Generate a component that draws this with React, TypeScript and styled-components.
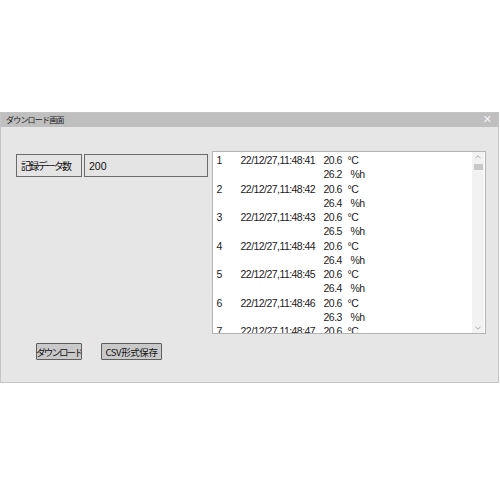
import React from "react";
import styled, { createGlobalStyle } from "styled-components";

const GlobalStyle = createGlobalStyle`
  html, body {
    margin: 0;
    padding: 0;
    background: #ffffff;
  }
  body {
    font-family: "Liberation Sans", "Noto Sans CJK JP", sans-serif;
  }
`;

type Record = {
  no: number;
  time: string;
  temp: string;
  hum: string;
};

const records: Record[] = [
  { no: 1, time: "22/12/27,11:48:41", temp: "20.6", hum: "26.2" },
  { no: 2, time: "22/12/27,11:48:42", temp: "20.6", hum: "26.4" },
  { no: 3, time: "22/12/27,11:48:43", temp: "20.6", hum: "26.5" },
  { no: 4, time: "22/12/27,11:48:44", temp: "20.6", hum: "26.4" },
  { no: 5, time: "22/12/27,11:48:45", temp: "20.6", hum: "26.4" },
  { no: 6, time: "22/12/27,11:48:46", temp: "20.6", hum: "26.3" },
  { no: 7, time: "22/12/27,11:48:47", temp: "20.6", hum: "26.3" },
];

const Page = styled.div`
  padding-top: 112px;
  width: 500px;
  height: 500px;
  box-sizing: border-box;
`;

const Window = styled.div`
  width: 499px;
  border: 1px solid #c4c4c4;
  box-sizing: border-box;
  background: #e6e6e6;
`;

const TitleBar = styled.div`
  display: flex;
  align-items: center;
  justify-content: space-between;
  height: 14px;
  padding: 0 6px 0 5px;
  background: #bfbfbf;
`;

const Title = styled.span`
  font-family: "Noto Sans CJK JP", sans-serif;
  font-size: 8px;
  letter-spacing: -0.8px;
  color: #222;
  line-height: 14px;
`;

const Close = styled.span`
  font-family: "DejaVu Sans", sans-serif;
  font-size: 11px;
  color: #f4f4f4;
  line-height: 14px;
`;

const Body = styled.div`
  display: flex;
  flex-direction: column;
  height: 255px;
  padding: 24px 12px 0 15px;
  box-sizing: border-box;
`;

const TopRow = styled.div`
  display: flex;
`;

const Info = styled.div`
  display: flex;
  gap: 2px;
  width: 196px;
  padding-top: 3px;
  height: 23px;
`;

const Field = styled.div<{ $width: number; $cjk?: boolean }>`
  display: flex;
  align-items: center;
  width: ${(p) => p.$width}px;
  height: 23px;
  box-sizing: border-box;
  border: 1.5px solid #6b6b6b;
  padding-left: 4px;
  font-family: ${(p) =>
    p.$cjk ? `"Noto Sans CJK JP", sans-serif` : `"Liberation Sans", sans-serif`};
  font-size: ${(p) => (p.$cjk ? "10px" : "10.5px")};
  letter-spacing: ${(p) => (p.$cjk ? "-1.8px" : "0")};
  white-space: nowrap;
  color: #111;
  background: #e4e4e4;
`;

const List = styled.div`
  display: flex;
  width: 275px;
  height: 183px;
  box-sizing: border-box;
  border: 1px solid #b4b4b4;
  background: #ffffff;
  overflow: hidden;
`;

const Rows = styled.div`
  flex: 1;
  padding: 1px 0 0 4px;
  overflow: hidden;
`;

const Line = styled.div`
  display: flex;
  height: 14.25px;
  line-height: 14.25px;
  font-family: "Liberation Sans", sans-serif;
  font-size: 10.5px;
  letter-spacing: -0.55px;
  color: #1a1a1a;
  white-space: nowrap;
`;

const Cell = styled.span<{ $width: number }>`
  display: inline-block;
  width: ${(p) => p.$width}px;
  flex: none;
`;

const Scrollbar = styled.div`
  display: flex;
  flex-direction: column;
  align-items: center;
  width: 12px;
  margin-right: 1px;
  background: #f2f2f2;
`;

const Arrow = styled.div`
  height: 10px;
  display: flex;
  align-items: center;
  justify-content: center;
`;

const Thumb = styled.div`
  width: 9px;
  height: 6px;
  margin-top: 2px;
  background: #c8c8c8;
`;

const Track = styled.div`
  flex: 1;
`;

const ButtonRow = styled.div`
  display: flex;
  gap: 19px;
  margin-top: 9px;
  padding-left: 20px;
`;

const Button = styled.button<{ $width: number; $spacing: number }>`
  display: flex;
  align-items: center;
  justify-content: center;
  width: ${(p) => p.$width}px;
  height: 17px;
  padding: 0;
  box-sizing: border-box;
  border: 1.5px solid #5e5e5e;
  border-radius: 1px;
  background: #c9c9c9;
  font-family: "Noto Sans CJK JP", sans-serif;
  font-size: 9.5px;
  letter-spacing: ${(p) => p.$spacing}px;
  white-space: nowrap;
  overflow: hidden;
  color: #111;
`;

const Chevron: React.FC<{ down?: boolean }> = ({ down }) => (
  <svg width="6" height="4" viewBox="0 0 6 4">
    <path
      d={down ? "M0.5 0.8 L3 3.2 L5.5 0.8" : "M0.5 3.2 L3 0.8 L5.5 3.2"}
      fill="none"
      stroke="#a6a6a6"
      strokeWidth="0.9"
    />
  </svg>
);

const App: React.FC = () => {
  return (
    <Page>
      <GlobalStyle />
      <Window>
        <TitleBar>
          <Title>ダウンロード画面</Title>
          <Close>✕</Close>
        </TitleBar>
        <Body>
          <TopRow>
            <Info>
              <Field $width={66} $cjk>
                記録データ数
              </Field>
              <Field $width={124}>200</Field>
            </Info>
            <List>
              <Rows>
                {records.map((r) => (
                  <React.Fragment key={r.no}>
                    <Line>
                      <Cell $width={24}>{r.no}</Cell>
                      <Cell $width={83}>{r.time}</Cell>
                      <Cell $width={24}>{r.temp}</Cell>
                      <Cell $width={20}>°C</Cell>
                    </Line>
                    <Line>
                      <Cell $width={107} />
                      <Cell $width={27}>{r.hum}</Cell>
                      <Cell $width={20}>%h</Cell>
                    </Line>
                  </React.Fragment>
                ))}
              </Rows>
              <Scrollbar>
                <Arrow>
                  <Chevron />
                </Arrow>
                <Thumb />
                <Track />
                <Arrow>
                  <Chevron down />
                </Arrow>
              </Scrollbar>
            </List>
          </TopRow>
          <ButtonRow>
            <Button $width={46} $spacing={-1.9}>
              ダウンロード
            </Button>
            <Button $width={61} $spacing={-0.4}>
              CSV形式保存
            </Button>
          </ButtonRow>
        </Body>
      </Window>
    </Page>
  );
};

export default App;
